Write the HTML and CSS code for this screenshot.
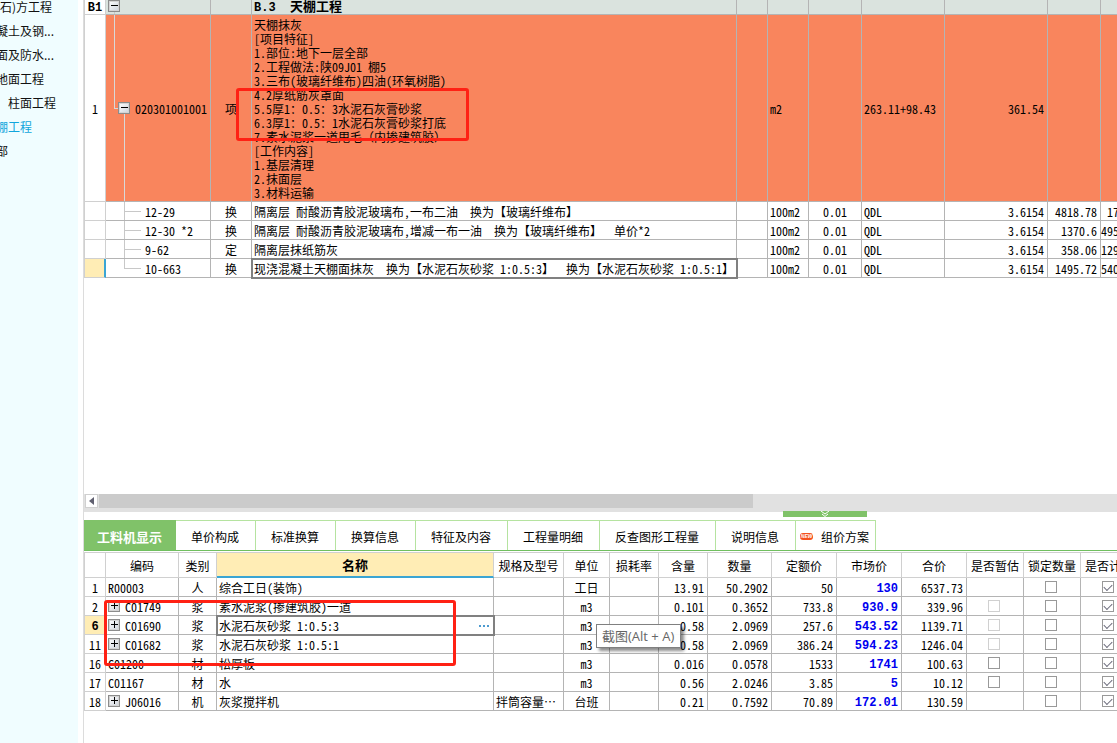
FILE: index.html
```html
<!DOCTYPE html>
<html lang="zh-CN">
<head>
<meta charset="utf-8">
<title>分部分项</title>
<link rel="stylesheet" href="styles.css">
</head>
<body>
<div class="app">
  <nav class="sidebar">
    <a href="#">(石)方工程</a>
    <a href="#">凝土及钢...</a>
    <a href="#">面及防水...</a>
    <a href="#">地面工程</a>
    <a href="#" class="child">柱面工程</a>
    <a href="#" class="current">棚工程</a>
    <a href="#">部</a>
  </nav>
  <main class="main">
    <section class="upper">
      <div class="grid-area">
        <table class="grid bill">
          <colgroup>
            <col class="w22"><col class="w105"><col class="w41"><col><col class="w31"><col class="w41"><col class="w53"><col class="w83"><col class="w103"><col class="w53"><col class="w22">
          </colgroup>
          <tbody>
            <tr class="section">
              <th class="center"><b>B1</b></th>
              <td class="root"><button class="toggle" aria-label="折叠"></button></td>
              <td></td>
              <td><b>B.3&nbsp; <span class="wide">天棚工程</span></b></td>
              <td></td><td></td><td></td><td></td><td></td><td></td><td></td>
            </tr>
            <tr class="item">
              <th class="center">1</th>
              <td class="node"><div class="code"><button class="toggle" aria-label="折叠"></button>020301001001</div></td>
              <td class="center">项</td>
              <td class="desc">天棚抹灰<br>[项目特征]<br>1.部位:地下一层全部<br>2.工程做法:陕09J01&ensp;棚5<br>3.三布(玻璃纤维布)四油(环氧树脂)<br>4.2厚纸筋灰罩面<br>5.5厚1：0.5：3水泥石灰膏砂浆<br>6.3厚1：0.5：1水泥石灰膏砂浆打底<br>7.素水泥浆一道甩毛<span class="full">（内掺建筑胶）</span><br>[工作内容]<br>1.基层清理<br>2.抹面层<br>3.材料运输</td>
              <td></td>
              <td>m2</td>
              <td></td>
              <td>263.11+98.43</td>
              <td class="num">361.54</td>
              <td></td><td></td>
            </tr>
            <tr><th></th><td class="leaf">12-29</td><td class="center">换</td><td>隔离层&ensp;耐酸沥青胶泥玻璃布,一布二油&ensp;&ensp;换为【玻璃纤维布】</td><td></td><td>100m2</td><td class="center">0.01</td><td>QDL</td><td class="num">3.6154</td><td class="num">4818.78</td><td class="num">17</td></tr>
            <tr><th></th><td class="leaf">12-30&ensp;*2</td><td class="center">换</td><td>隔离层&ensp;耐酸沥青胶泥玻璃布,增减一布一油&ensp;&ensp;换为【玻璃纤维布】&ensp;&ensp;单价*2</td><td></td><td>100m2</td><td class="center">0.01</td><td>QDL</td><td class="num">3.6154</td><td class="num">1370.6</td><td class="num">495</td></tr>
            <tr><th></th><td class="leaf">9-62</td><td class="center">定</td><td>隔离层抹纸筋灰</td><td></td><td>100m2</td><td class="center">0.01</td><td>QDL</td><td class="num">3.6154</td><td class="num">358.06</td><td class="num">129</td></tr>
            <tr><th class="here marked"></th><td class="leaf last">10-663</td><td class="center">换</td><td class="selected">现浇混凝土天棚面抹灰&ensp;&ensp;换为【水泥石灰砂浆&ensp;1:0.5:3】&ensp;&ensp;换为【水泥石灰砂浆&ensp;1:0.5:1】</td><td></td><td>100m2</td><td class="center">0.01</td><td>QDL</td><td class="num">3.6154</td><td class="num">1495.72</td><td class="num">540</td></tr>
          </tbody>
        </table>
      </div>
      <div class="scrollbar">
        <button class="arrow" aria-label="向左滚动"><svg width="5" height="8" viewBox="0 0 5 8"><path d="M5 0V8L0 4Z" fill="#606070"/></svg></button>
        <div class="thumb"></div>
      </div>
      <button class="handle" aria-label="收起"><svg width="10" height="6" viewBox="0 0 10 6" fill="none" stroke="#fff"><path d="M1 0L5 3L9 0M2 3L5 5.5L8 3"/></svg></button>
    </section>
    <section class="lower">
      <div class="tabs">
        <button class="tab active">工料机显示</button><button class="tab">单价构成</button><button class="tab">标准换算</button><button class="tab">换算信息</button><button class="tab">特征及内容</button><button class="tab">工程量明细</button><button class="tab">反查图形工程量</button><button class="tab">说明信息</button><button class="tab fresh"><span class="new">NEW</span>组价方案</button>
      </div>
      <div class="detail">
        <table class="grid materials">
          <colgroup>
            <col class="w22"><col class="w73"><col class="w38"><col><col class="w70"><col class="w46"><col class="w49"><col class="w49"><col class="w64"><col class="w65"><col class="w65"><col class="w65"><col class="w57"><col class="w57"><col class="w57">
          </colgroup>
          <thead>
            <tr><th></th><th>编码</th><th>类别</th><th class="sorted">名称</th><th>规格及型号</th><th>单位</th><th>损耗率</th><th>含量</th><th>数量</th><th>定额价</th><th>市场价</th><th>合价</th><th>是否暂估</th><th>锁定数量</th><th class="cut">是否计</th></tr>
          </thead>
          <tbody>
            <tr><th>1</th><td>R00003</td><td class="center">人</td><td>综合工日(装饰)</td><td></td><td class="center">工日</td><td></td><td class="num">13.91</td><td class="num">50.2902</td><td class="num">50</td><td class="num price">130</td><td class="num">6537.73</td><td></td><td class="center"><input type="checkbox" aria-label="锁定数量"></td><td class="center"><input type="checkbox" aria-label="是否计" checked></td></tr>
            <tr><th>2</th><td><div class="code"><button class="toggle plus" aria-label="展开"></button>C01749</div></td><td class="center">浆</td><td>素水泥浆(掺建筑胶)一道</td><td></td><td class="center">m3</td><td></td><td class="num">0.101</td><td class="num">0.3652</td><td class="num">733.8</td><td class="num price">930.9</td><td class="num">339.96</td><td class="center"><input type="checkbox" aria-label="是否暂估" disabled></td><td class="center"><input type="checkbox" aria-label="锁定数量"></td><td class="center"><input type="checkbox" aria-label="是否计" checked></td></tr>
            <tr><th class="here"><b>6</b></th><td><div class="code"><button class="toggle plus" aria-label="展开"></button>C01690</div></td><td class="center">浆</td><td class="selected"><div class="pick">水泥石灰砂浆&ensp;1:0.5:3<button class="more" aria-label="选择"><svg width="11" height="2" viewBox="0 0 11 2" fill="#4d9bd0"><path d="M0 0H2V2H0ZM4 0H6V2H4ZM8 0H10V2H8Z"/></svg></button></div></td><td></td><td class="center">m3</td><td></td><td class="num">0.58</td><td class="num">2.0969</td><td class="num">257.6</td><td class="num price">543.52</td><td class="num">1139.71</td><td class="center"><input type="checkbox" aria-label="是否暂估" disabled></td><td class="center"><input type="checkbox" aria-label="锁定数量"></td><td class="center"><input type="checkbox" aria-label="是否计" checked></td></tr>
            <tr><th>11</th><td><div class="code"><button class="toggle plus" aria-label="展开"></button>C01682</div></td><td class="center">浆</td><td>水泥石灰砂浆&ensp;1:0.5:1</td><td></td><td class="center">m3</td><td></td><td class="num">0.58</td><td class="num">2.0969</td><td class="num">386.24</td><td class="num price">594.23</td><td class="num">1246.04</td><td class="center"><input type="checkbox" aria-label="是否暂估" disabled></td><td class="center"><input type="checkbox" aria-label="锁定数量"></td><td class="center"><input type="checkbox" aria-label="是否计" checked></td></tr>
            <tr><th>16</th><td>C01200</td><td class="center">材</td><td>松厚板</td><td></td><td class="center">m3</td><td></td><td class="num">0.016</td><td class="num">0.0578</td><td class="num">1533</td><td class="num price">1741</td><td class="num">100.63</td><td class="center"><input type="checkbox" aria-label="是否暂估"></td><td class="center"><input type="checkbox" aria-label="锁定数量"></td><td class="center"><input type="checkbox" aria-label="是否计" checked></td></tr>
            <tr><th>17</th><td>C01167</td><td class="center">材</td><td>水</td><td></td><td class="center">m3</td><td></td><td class="num">0.56</td><td class="num">2.0246</td><td class="num">3.85</td><td class="num price">5</td><td class="num">10.12</td><td class="center"><input type="checkbox" aria-label="是否暂估"></td><td class="center"><input type="checkbox" aria-label="锁定数量"></td><td class="center"><input type="checkbox" aria-label="是否计" checked></td></tr>
            <tr><th>18</th><td><div class="code"><button class="toggle plus" aria-label="展开"></button>J06016</div></td><td class="center">机</td><td>灰浆搅拌机</td><td>拌筒容量…</td><td class="center">台班</td><td></td><td class="num">0.21</td><td class="num">0.7592</td><td class="num">70.89</td><td class="num price">172.01</td><td class="num">130.59</td><td></td><td class="center"><input type="checkbox" aria-label="锁定数量"></td><td class="center"><input type="checkbox" aria-label="是否计" checked></td></tr>
          </tbody>
        </table>
        <div class="mark mark-materials"></div>
        <div class="tooltip" role="tooltip">截图(Alt + A)</div>
      </div>
    </section>
    <div class="mark mark-desc"></div>
  </main>
</div>
</body>
</html>
```

FILE: styles.css
```css
* { box-sizing: border-box; }

body {
  margin: 0;
  background: #fff;
  color: #000;
  font: 12px/14px "Noto Sans CJK SC", sans-serif;
}

button {
  margin: 0;
  padding: 0;
  border: 0;
  background: none;
  color: inherit;
  font: inherit;
}

.app {
  display: flex;
  min-height: 100vh;
  overflow: hidden;
}

/* Project tree */
.sidebar {
  display: flex;
  flex-direction: column;
  flex: none;
  width: 78px;
  margin-right: 5px;
  background: #f0fdff;
  overflow: hidden;
}
.sidebar a {
  height: 24px;
  margin-left: -4px;
  line-height: 24px;
  color: #111;
  text-decoration: none;
  white-space: nowrap;
}
.sidebar a:first-child { height: 19px; line-height: 14px; }
.sidebar a.child { padding-left: 12px; }
.sidebar a.current { color: #12a5dc; }

.main {
  position: relative;
  display: flex;
  flex-direction: column;
  flex: 1;
  min-width: 0;
  border-left: 1px solid #dcdcdc;
}
.upper {
  position: relative;
  z-index: 1;
  display: flex;
  flex-direction: column;
  flex: 1;
}
.grid-area { flex: 1; overflow: hidden; }

/* Shared grid */
.grid {
  table-layout: fixed;
  border-collapse: separate;
  border-spacing: 0;
  font-feature-settings: "hwid";
}
.bill { width: calc(100% + 6px); }
.materials { width: calc(100% + 21px); }

.grid th,
.grid td {
  height: 19px;
  padding: 2px 3px 0 2px;
  border-right: 1px solid #b4b4b4;
  border-bottom: 1px solid #b4b4b4;
  font-weight: normal;
  text-align: left;
  vertical-align: middle;
  white-space: nowrap;
  overflow: hidden;
}
.grid th { padding: 2px 0 0; text-align: center; }
.grid th:first-child { border-left: 1px solid #d0d0d0; border-color: #d0d0d0; }
.grid td.num { padding-left: 0; text-align: right; }
.grid td.center { padding: 2px 0 0; text-align: center; }
.grid .here { background: #ffedb5; }
.grid th.marked { border-right: 2px solid #3aa5d4; }
.grid .selected { outline: 2px solid #808080; outline-offset: -1px; }
.grid b, .grid .price { font: bold 12px/14px "Liberation Mono", "Noto Sans CJK SC", monospace; }
.grid td.price { padding-top: 4px; line-height: 12px; color: #0000f0; }
.grid b .wide { font-size: 13px; }
.full { font-feature-settings: normal; }

.w22 { width: 22px; }
.w31 { width: 31px; }
.w38 { width: 38px; }
.w41 { width: 41px; }
.w46 { width: 46px; }
.w49 { width: 49px; }
.w53 { width: 53px; }
.w57 { width: 57px; }
.w64 { width: 64px; }
.w65 { width: 65px; }
.w70 { width: 70px; }
.w73 { width: 73px; }
.w83 { width: 83px; }
.w103 { width: 103px; }
.w105 { width: 105px; }

.grid .section th, .grid .section td {
  height: 15px;
  padding-top: 0;
  line-height: 10px;
}
.grid .section b { line-height: 10px; }
.section td { background: #dae3de; }
.grid .item th, .grid .item td { height: 187px; }
.item td { background-color: #f9855d; }

/* Expand and collapse boxes */
.toggle {
  display: block;
  flex: none;
  width: 12px;
  height: 12px;
  border: 1px solid #8c8c8c;
  box-shadow: inset 0 0 0 1px #d4d4d4;
  background:
    linear-gradient(#000, #000) 2px 4px / 7px 1px no-repeat,
    linear-gradient(135deg, #fff, #cdd3dc);
}
.toggle.plus {
  background:
    linear-gradient(#000, #000) 2px 4px / 7px 1px no-repeat,
    linear-gradient(#000, #000) 5px 1px / 1px 7px no-repeat,
    linear-gradient(135deg, #fff, #cdd3dc);
}
.code { display: flex; align-items: center; gap: 5px; }
.code .toggle { margin-bottom: 2px; }

.grid td.root {
  background: linear-gradient(#c8c8c8, #c8c8c8) 8px 100% / 1px 4px no-repeat #dae3de;
  vertical-align: top;
}
.grid td.node {
  padding-left: 12px;
  background-image:
    linear-gradient(#d8d8d8, #d8d8d8),
    linear-gradient(#d8d8d8, #d8d8d8),
    linear-gradient(#d8d8d8, #d8d8d8);
  background-position: 8px 0, 8px 50%, 18px 100%;
  background-size: 1px 50%, 4px 1px, 1px 50%;
  background-repeat: no-repeat;
}
.grid td.leaf {
  padding-left: 39px;
  background-image: linear-gradient(#c8c8c8, #c8c8c8), linear-gradient(#c8c8c8, #c8c8c8);
  background-position: 18px 0, 18px 50%;
  background-size: 1px 100%, 17px 1px;
  background-repeat: no-repeat;
}
.grid td.last { background-size: 1px 50%, 17px 1px; }

/* Horizontal scrollbar and pane handle */
.scrollbar {
  display: flex;
  height: 18px;
  padding: 0 0 4px 1px;
  background: #e1e1e1;
}
.arrow {
  display: flex;
  align-items: center;
  justify-content: center;
  width: 13px;
  background: #fff;
  border: 1px solid #d0d0d0;
}
.thumb { width: 63.4%; margin-left: 1px; background: #cbcbcb; }
.handle {
  position: absolute;
  right: 250px;
  bottom: -5px;
  display: flex;
  justify-content: center;
  width: 84px;
  height: 6px;
  background: #80c269;
}

/* Detail pane */
.lower { padding: 8px 0 32px; overflow: hidden; }
.tabs {
  display: flex;
  height: 31px;
  border-bottom: 1px solid #70bf5f;
  white-space: nowrap;
}
.tab {
  padding: 2px 16px 0 15px;
  border-top: 1px solid #b5e3a0;
  border-right: 1px solid #b5e3a0;
}
.tab.active {
  width: 92px;
  padding: 2px 0 0;
  border-color: #80c269;
  background: #80c269;
  color: #fff;
  font-size: 13px;
  font-weight: bold;
}
.tab.fresh {
  display: flex;
  align-items: center;
  gap: 8px;
  padding: 2px 6px 0 4px;
}
.new {
  width: 13px;
  height: 7px;
  border-radius: 3px;
  background: #f4511e;
  color: #fff;
  font: italic bold 5px/7px "Liberation Sans", sans-serif;
  text-align: center;
}
.detail {
  position: relative;
  margin-top: 1px;
  border-top: 1px solid #d0d0d0;
}
.materials thead th { height: 25px; border-color: #d0d0d0; }
.grid th.sorted {
  padding-top: 0;
  border-bottom: 2px solid #3aa5d4;
  background: #ffedb5;
  font-size: 13px;
  font-weight: bold;
}
.grid th.cut { padding-left: 4px; text-align: left; }

input[type="checkbox"] {
  appearance: none;
  display: block;
  width: 12px;
  height: 12px;
  margin: 0 auto 2px;
  border: 1px solid #999;
  background: #fff;
}
input[type="checkbox"]:disabled { border-color: #d0d0d0; }
input[type="checkbox"]:checked::before {
  content: "";
  display: block;
  width: 7px;
  height: 4px;
  margin: 2px 0 0 1px;
  border: solid #6c6c7c;
  border-width: 0 0 1px 1px;
  transform: rotate(-45deg);
}
.grid.materials td:nth-child(n+13) { padding-right: 2px; }

.pick { display: flex; justify-content: space-between; align-items: center; }
.more { display: flex; }

/* Overlays */
.mark {
  position: absolute;
  z-index: 2;
  border: 3px solid #ff2114;
  border-radius: 3px;
}
.mark-desc { left: 152px; top: 88px; width: 233px; height: 53px; }
.mark-materials { left: 20px; top: 47px; width: 352px; height: 66px; }
.tooltip {
  position: absolute;
  left: 512px;
  top: 71px;
  padding: 4px 6px 4px 5px;
  border: 1px solid #808080;
  background: rgba(255, 255, 255, .94);
  box-shadow: 3px 3px 3px rgba(0, 0, 0, .45);
  color: #666;
  font-family: "Open Sans", "Noto Sans CJK SC", sans-serif;
  font-size: 13px;
}
```
